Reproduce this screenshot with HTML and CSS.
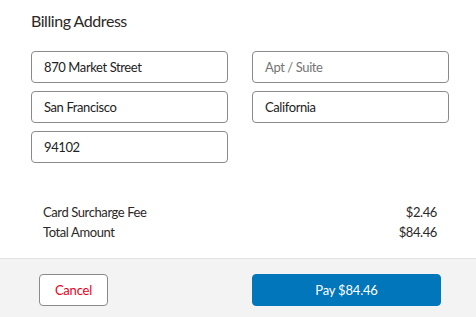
FILE: index.html
```html
<!DOCTYPE html>
<html>
<head>
<meta charset="utf-8">
<link rel="stylesheet" href="styles.css">
</head>
<body>
<div class="page">
  <main class="content">
    <h2 class="title">Billing Address</h2>
    <div class="form-grid">
      <div class="field">870 Market Street</div>
      <div class="field placeholder">Apt / Suite</div>
      <div class="field">San Francisco</div>
      <div class="field">California</div>
      <div class="field">94102</div>
    </div>
    <div class="summary">
      <div class="row"><span>Card Surcharge Fee</span><span>$2.46</span></div>
      <div class="row"><span>Total Amount</span><span>$84.46</span></div>
    </div>
  </main>
  <footer class="footer">
    <button class="btn btn-cancel">Cancel</button>
    <button class="btn btn-pay">Pay $84.46</button>
  </footer>
</div>
</body>
</html>
```

FILE: styles.css
```css
* { box-sizing: border-box; }
html, body { margin: 0; padding: 0; background: #fff; }
body {
  font-family: "Lato", "Open Sans", sans-serif;
  color: #181818;
  width: 476px;
  height: 317px;
  overflow: hidden;
}
.page { display: flex; flex-direction: column; height: 317px; }
.content { flex: 1; padding: 9px 27px 0 31px; }
.title {
  margin: 0;
  font-size: 16px;
  line-height: 24px;
  font-weight: 400;
  letter-spacing: -0.45px;
  color: #2b2826;
}
.form-grid {
  margin-top: 18px;
  display: grid;
  grid-template-columns: 197px 197px;
  column-gap: 24px;
  row-gap: 8px;
}
.field {
  height: 32px;
  border: 1px solid #8a8a8a;
  border-radius: 4px;
  padding: 0 12px;
  font-size: 13px;
  line-height: 30px;
  letter-spacing: -0.4px;
  color: #222;
  background: #fff;
}
.field.placeholder { color: #747474; }
.summary { margin-top: 39px; padding: 0 12px; }
.row {
  display: flex;
  justify-content: space-between;
  font-size: 13px;
  line-height: 20px;
  letter-spacing: -0.4px;
  color: #2b2826;
}
.footer {
  height: 59px;
  border-top: 1px solid #e2e2e2;
  background: #f3f3f3;
  display: flex;
  justify-content: space-between;
  align-items: flex-start;
  padding: 15px 35px 0 39px;
}
.btn {
  font-family: "Lato", "Open Sans", sans-serif;
  font-size: 13px;
  height: 32px;
  border-radius: 4px;
  padding: 0;
  letter-spacing: -0.2px;
  cursor: pointer;
}
.btn-cancel {
  width: 69px;
  background: #fff;
  border: 1px solid #8a8a8a;
  color: #ea001e;
}
.btn-pay {
  width: 189px;
  background: #0176bb;
  border: 1px solid #0176bb;
  color: #fff;
}
```
